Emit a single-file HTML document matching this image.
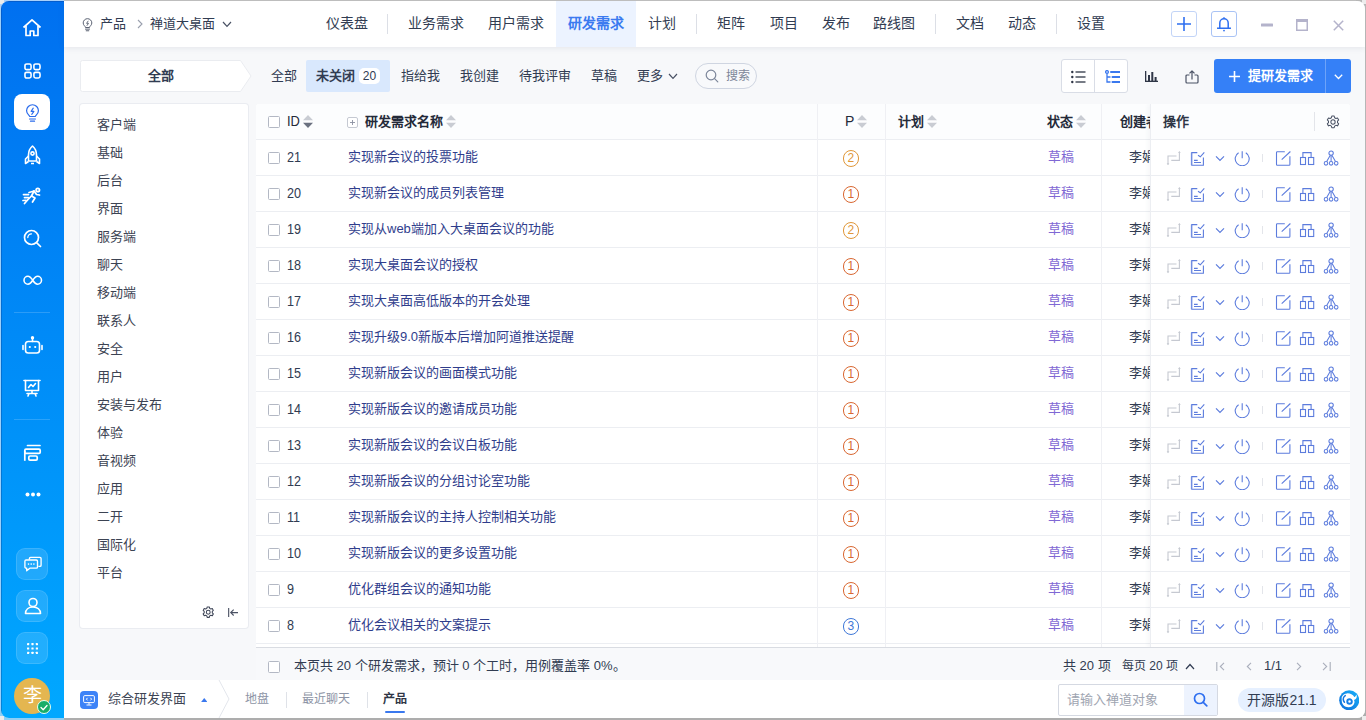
<!DOCTYPE html>
<html lang="zh-CN"><head><meta charset="utf-8"><title>研发需求</title>
<style>
*{box-sizing:border-box;margin:0;padding:0}
html,body{width:1366px;height:720px;overflow:hidden}
body{font-family:"Liberation Sans",sans-serif;font-size:13px;color:#313c52;background:#e4e4e4;position:relative}
i{font-style:normal;display:block}
.edge-l{position:absolute;left:0;top:0;width:12px;height:720px;background:#9ccffa}
.edge-t{position:absolute;left:0;top:0;width:1366px;height:10px;background:linear-gradient(90deg,#a8d0fa 0,#a8d0fa 64px,#bdbdbd 64px)}
.edge-r{position:absolute;right:0;top:0;width:10px;height:720px;background:#b6b6b6}
.edge-b{position:absolute;left:0;bottom:0;width:1366px;height:10px;background:linear-gradient(90deg,#8ecff5 0,#8ecff5 64px,#adadad 64px)}
.cn{position:absolute;width:4px;height:4px;background:#ececec}
#win{position:absolute;left:1px;top:1px;width:1364px;height:717px;border-radius:8px;overflow:hidden;background:#f7f8fa}
/* sidebar */
#side{position:absolute;left:0;top:0;width:63px;height:717px;background:linear-gradient(180deg,#0070f0 0%,#00a8ff 100%);box-shadow:inset 1px 1px 0 rgba(10,50,130,.30)}
#side svg{position:absolute}
.sact{position:absolute;left:13px;top:93px;width:36px;height:36px;border-radius:8px;background:#fff}
.ssep{position:absolute;left:13px;width:36px;height:1px;background:rgba(255,255,255,.17)}
.sbox{position:absolute;left:15px;width:32px;height:32px;border-radius:9px;background:rgba(255,255,255,.13);border:1px solid rgba(255,255,255,.12)}
.avatar{position:absolute;left:13px;top:677px;width:36px;height:36px;border-radius:50%;background:#e4b650;color:#fff;font-size:19px;line-height:35px;text-align:center}
.online{position:absolute;left:36px;top:699px;width:14px;height:14px;border-radius:50%;background:#17ad68;border:1px solid #e6fff2}
/* top nav */
#nav{position:absolute;left:63px;top:0;width:1301px;height:46px;background:#fff;box-shadow:0 1px 6px rgba(60,70,100,.10)}
#nav .t{position:absolute;top:0;height:46px;line-height:45px;font-size:14px;color:#313c52;white-space:nowrap}
#nav .bc{font-size:13px}
#nav .sep{position:absolute;top:13px;width:1px;height:20px;background:#dcdfe6}
#nav .act{position:absolute;left:492px;top:0;width:80px;height:46px;background:#ecf3ff}
#nav .sq{position:absolute;top:10px;width:26px;height:26px;border:1px solid #c2d4f7;border-radius:3px;background:#fff}
#nav svg{position:absolute}
/* toolbar */
.crumb{position:absolute;left:79px;top:59px;width:172px;height:32px}
.crumb b{position:absolute;left:0;top:0;width:161px;line-height:32px;text-align:center;font-size:13px;color:#313c52}
.tab{position:absolute;top:59px;height:32px;line-height:31px;white-space:nowrap;color:#313c52}
.tabact{position:absolute;left:305px;top:59px;width:84px;height:32px;border-radius:2px;background:#d9e8fd}
.badge{position:absolute;left:358px;top:67px;width:21px;height:16px;border-radius:5px;background:#fff;font-size:12px;line-height:16px;text-align:center;color:#313c52}
.search{position:absolute;left:694px;top:62px;width:62px;height:26px;border:1px solid #cfd5e1;border-radius:13px;background:#f8f9fb}
.search span{position:absolute;left:30px;top:0;line-height:24px;font-size:12px;color:#7d8698}
.bgroup{position:absolute;left:1060px;top:58px;width:67px;height:34px;border:1px solid #d9dde6;border-radius:3px;background:#fff}
.bgroup i{position:absolute;left:32px;top:0;width:1px;height:32px;background:#d9dde6}
.pbtn{position:absolute;left:1213px;top:58px;width:137px;height:34px;border-radius:3px;background:#3580f7;color:#fff;font-weight:bold}
.pbtn span{position:absolute;left:34px;top:0;line-height:34px;font-size:13px}
.pbtn i{position:absolute;left:111px;top:0;width:1px;height:34px;background:rgba(255,255,255,.28)}
/* left panel */
#mods{position:absolute;left:79px;top:103px;width:168px;height:524px;background:#fff;border-radius:3px;box-shadow:0 0 0 1px rgba(225,228,235,.6)}
.mod{position:absolute;left:16.500px;height:20px;line-height:20px;font-size:13px;color:#3c4353}
/* table */
#tbl{position:absolute;left:255px;top:103px;width:1094px;height:577px;background:#fff;overflow:hidden;border-radius:3px 3px 0 0}
.th{position:absolute;left:0;top:0;width:1094px;height:36px;background:#fcfdfe;border-bottom:1px solid #eceef2;font-weight:bold;color:#242a39}
.th span{position:absolute;top:0;line-height:35px;white-space:nowrap}
.sort{position:absolute;top:11px}
.vl{position:absolute;top:0;width:1px;height:545px;background:#eff0f4}
.tr{position:absolute;left:0;width:1094px;height:36px;border-bottom:1px solid #eceef2}
.cb{position:absolute;width:12px;height:12px;border:1px solid #b3b8c4;border-radius:1.500px;background:#fff}
.id{position:absolute;left:30.500px;top:0;line-height:35px;color:#313c52;font-size:14px;transform:scaleX(.9);transform-origin:0 50%}
.tt{position:absolute;left:92px;top:0;line-height:34px;color:#2f3d8c;white-space:nowrap}
.pri{position:absolute;left:586.500px;top:10px;width:16.500px;height:16.500px;border:1px solid;border-radius:50%;font-size:12px;line-height:14.500px;text-align:center}
.st{position:absolute;left:792px;top:0;line-height:34px;color:#7f68d4}
.cr{position:absolute;left:872.500px;top:0;line-height:34px;color:#313c52}
.acts{position:absolute;left:894px;top:0;width:200px;height:35px;background:#fff}
.ai{position:absolute;top:10px}
.adiv{position:absolute;left:112px;top:14px;width:1px;height:8px;background:#e3e5ea}
.fix{position:absolute;left:894px;top:0;width:200px;height:545px;border-left:1px solid #eceef2;box-shadow:-2px 0 4px rgba(80,90,120,.05);pointer-events:none}
.tf{position:absolute;left:0;top:543px;width:1094px;height:34px;background:#f8f9fb;border-top:1px solid #d9dce2;color:#313c52}
.tf span{position:absolute;top:1px;line-height:34px;white-space:nowrap}
.tf svg{position:absolute}
/* bottom bar */
#bot{position:absolute;left:63px;top:679px;width:1301px;height:38px;background:#fff}
#bot .t{position:absolute;top:0;line-height:38px;white-space:nowrap;font-size:13px}
#bot .sep{position:absolute;top:12px;width:1px;height:16px;background:#dfe2e8}
#bot svg{position:absolute}
.appi{position:absolute;left:16px;top:11px;width:18px;height:18px;border-radius:4px;background:#3d83f7}
.gsearch{position:absolute;left:994px;top:4px;width:160px;height:32px;border:1px solid #d5d9e2;border-radius:2px;background:#fff}
.gsearch span{position:absolute;left:8px;top:0;line-height:30px;color:#a0a5b1;font-size:13px}
.gsearch i{position:absolute;right:0;top:0;width:33px;height:30px;background:#edf3fe}
.ver{position:absolute;left:1174px;top:8px;width:88px;height:24px;border-radius:12px;background:#e6f0ff;font-size:14px;line-height:24px;text-align:center;color:#313c52}
</style></head><body>
<div class="edge-l"></div><div class="edge-t"></div><div class="edge-r"></div><div class="edge-b"></div><i class="cn" style="left:0;top:0"></i><i class="cn" style="right:0;top:0"></i><i class="cn" style="left:0;bottom:0"></i><i class="cn" style="right:0;bottom:0"></i>
<div id="win">

<!-- ============ SIDEBAR ============ -->
<div id="side">
 <!-- home -->
 <svg style="left:21px;top:17px" width="20" height="20" viewBox="0 0 20 20" fill="none" stroke="#fff" stroke-width="1.700" stroke-linejoin="round"><path d="M1.500 9.500L10 1.800l8.500 7.700"/><path d="M4 8v9.500h4.200v-4.500h3.600v4.500H16V8"/></svg>
 <!-- grid -->
 <svg style="left:22.500px;top:61.500px" width="17" height="16" viewBox="0 0 18 17" fill="none" stroke="#fff" stroke-width="1.700"><rect x="1" y="1" width="6.500" height="6" rx="1.800"/><rect x="10.500" y="1" width="6.500" height="6" rx="1.800"/><rect x="1" y="10" width="6.500" height="6" rx="1.800"/><rect x="10.500" y="10" width="6.500" height="6" rx="1.800"/></svg>
 <div class="sact"></div>
 <!-- bulb -->
 <svg style="left:23.500px;top:102.500px" width="15" height="18.500" viewBox="0 0 16 20" fill="none" stroke="#2b6cec" stroke-width="1.300" stroke-linecap="round" stroke-linejoin="round"><path d="M5 13.500c0-1.300-3.400-2.500-3.400-6.300a6.400 6.400 0 0 1 12.800 0c0 3.800-3.400 5-3.400 6.300z"/><path d="M4.800 16.200h6.400M5.800 18.600h4.400"/><path d="M8.800 4.500L6.500 8h3L7.200 11.200" stroke-width="1.200"/></svg>
 <!-- rocket -->
 <svg style="left:23px;top:144px" width="17" height="20" viewBox="0 0 17 20" fill="none" stroke="#fff" stroke-width="1.600" stroke-linejoin="round"><path d="M8.500 1C5.500 3.500 4.500 7 4.500 10v6h8v-6c0-3-1-6.500-4-9z"/><circle cx="8.500" cy="8.500" r="1.600"/><path d="M4.500 11L1.500 14v4.500l3-2M12.500 11l3 3v4.500l-3-2"/><path d="M7 18.500h3"/></svg>
 <!-- runner -->
 <svg style="left:21px;top:186px" width="20" height="18" viewBox="0 0 20 18" fill="none" stroke="#fff" stroke-width="1.750" stroke-linecap="round" stroke-linejoin="round"><circle cx="15.800" cy="3" r="1.700"/><path d="M7 5.500l5-1.500 2.500 3.500 3 .5"/><path d="M12 4l-2.500 5 3.500 2-2.500 4"/><path d="M9.500 9L6 12.500 2.500 16.500"/><path d="M1.500 7.500h5M2.500 10.500h4M1 13.500l3-.2"/></svg>
 <!-- search -->
 <svg style="left:22px;top:228px" width="19" height="19" viewBox="0 0 19 19" fill="none" stroke="#fff" stroke-width="1.700" stroke-linecap="round"><circle cx="8.500" cy="8.500" r="7"/><path d="M13.800 13.800l3.700 3.700"/><path d="M4.800 8.500a3.700 3.700 0 0 1 3.700-3.700" stroke-width="1.300"/></svg>
 <!-- infinity -->
 <svg style="left:22px;top:274px" width="19.500" height="10.500" viewBox="0 0 21 12" fill="none" stroke="#fff" stroke-width="1.800"><path d="M10.500 6C8.500 3 7 1.500 5 1.500a4.500 4.500 0 0 0 0 9c2 0 3.500-1.500 5.500-4.500s3.500-4.500 5.500-4.500a4.500 4.500 0 0 1 0 9c-2 0-3.500-1.500-5.500-4.500z"/></svg>
 <div class="ssep" style="top:311px"></div>
 <!-- robot -->
 <svg style="left:21px;top:335px" width="21" height="19" viewBox="0 0 21 19" fill="none" stroke="#fff" stroke-width="1.600" stroke-linecap="round"><rect x="3.500" y="5.500" width="14" height="11.500" rx="2.800"/><path d="M10.500 5.500V2.500"/><circle cx="10.500" cy="1.800" r=".9" fill="#fff"/><path d="M1 9.500v4M20 9.500v4"/><circle cx="7.800" cy="11" r="1.100" fill="#fff" stroke="none"/><circle cx="13.200" cy="11" r="1.100" fill="#fff" stroke="none"/></svg>
 <!-- presentation -->
 <svg style="left:22px;top:378px" width="18" height="18" viewBox="0 0 18 18" fill="none" stroke="#fff" stroke-width="1.600" stroke-linecap="round" stroke-linejoin="round"><path d="M1 1.500h16"/><path d="M2.500 1.500v10h13v-10"/><path d="M5.500 8.500l2.500-3 2 2 2.500-3"/><path d="M4 14.500h10M6 14.500l-1 2.500M12 14.500l1 2.500M9 11.500v3"/></svg>
 <div class="ssep" style="top:418px"></div>
 <!-- kanban -->
 <svg style="left:22px;top:443px" width="19" height="18" viewBox="0 0 19 18" fill="none" stroke="#fff" stroke-width="1.700"><path d="M4.500 1.500h12.500" stroke-linecap="round"/><rect x="1.800" y="5.200" width="15.400" height="4.200" rx="1.200"/><rect x="5.800" y="12" width="8.400" height="4.200" rx="1.200"/><path d="M1.800 7v9.800"/></svg>
 <!-- dots -->
 <svg style="left:24px;top:491px" width="16" height="5" viewBox="0 0 16 5" fill="#fff"><circle cx="2.500" cy="2.500" r="2"/><circle cx="8" cy="2.500" r="2"/><circle cx="13.500" cy="2.500" r="2"/></svg>
 <div class="sbox" style="top:547px"></div>
 <div class="sbox" style="top:589px"></div>
 <div class="sbox" style="top:631px"></div>
 <!-- chat -->
 <svg style="left:23px;top:555px" width="18" height="16.200" viewBox="0 0 20 18" fill="none" stroke="#fff" stroke-width="1.500" stroke-linejoin="round"><path d="M6 4V2.800A1.300 1.300 0 0 1 7.300 1.500h10.400A1.300 1.300 0 0 1 19 2.800v7.400a1.300 1.300 0 0 1-1.300 1.300H16"/><path d="M2.300 4.500h11.400A1.300 1.300 0 0 1 15 5.800v6.400a1.300 1.300 0 0 1-1.300 1.300H6.500L3 16.500v-3h-.7A1.300 1.300 0 0 1 1 12.200V5.800a1.300 1.300 0 0 1 1.300-1.300z"/><circle cx="5" cy="9" r=".9" fill="#fff" stroke="none"/><circle cx="8" cy="9" r=".9" fill="#fff" stroke="none"/><circle cx="11" cy="9" r=".9" fill="#fff" stroke="none"/></svg>
 <!-- user -->
 <svg style="left:23px;top:596px" width="18" height="18" viewBox="0 0 18 18" fill="none" stroke="#fff" stroke-width="1.600"><circle cx="9" cy="5.500" r="4"/><path d="M1.500 16.500c0-4 3-6.500 7.500-6.500s7.500 2.500 7.500 6.500z" stroke-linejoin="round"/></svg>
 <!-- 9 dots -->
 <svg style="left:26px;top:642px" width="11" height="11" viewBox="0 0 12 12" fill="#fff"><rect x="0" y="0" width="2.400" height="2.400" rx=".5"/><rect x="4.800" y="0" width="2.400" height="2.400" rx=".5"/><rect x="9.600" y="0" width="2.400" height="2.400" rx=".5"/><rect x="0" y="4.800" width="2.400" height="2.400" rx=".5"/><rect x="4.800" y="4.800" width="2.400" height="2.400" rx=".5"/><rect x="9.600" y="4.800" width="2.400" height="2.400" rx=".5"/><rect x="0" y="9.600" width="2.400" height="2.400" rx=".5"/><rect x="4.800" y="9.600" width="2.400" height="2.400" rx=".5"/><rect x="9.600" y="9.600" width="2.400" height="2.400" rx=".5"/></svg>
 <div class="avatar">李</div>
 <div class="online"></div>
 <svg style="left:39px;top:703px" width="8" height="7" viewBox="0 0 8 7" fill="none" stroke="#fff" stroke-width="1.300" stroke-linecap="round" stroke-linejoin="round"><path d="M1 3.500l2.200 2.200L7 1.500"/></svg>
</div>

<!-- ============ NAV ============ -->
<div id="nav">
 <svg style="left:17.500px;top:16.500px" width="11" height="14" viewBox="0 0 12 15" fill="none" stroke="#4a5265" stroke-width="1" stroke-linecap="round" stroke-linejoin="round"><path d="M3.800 9.800C3.800 8.800 1.300 7.900 1.300 5.300a4.700 4.700 0 0 1 9.400 0c0 2.600-2.500 3.500-2.500 4.500z"/><path d="M3.800 12h4.400M4.600 13.800h2.800"/><path d="M6.600 3.300L5 5.700h2.100L5.500 8" stroke-width=".9"/></svg>
 <span class="t bc" style="left:36px">产品</span>
 <svg style="left:73px;top:18px" width="6" height="10" viewBox="0 0 6 10" fill="none" stroke="#9aa0ae" stroke-width="1.100"><path d="M1 1l4 4-4 4"/></svg>
 <span class="t bc" style="left:86px">禅道大桌面</span>
 <svg style="left:158px;top:20px" width="10" height="7" viewBox="0 0 10 7" fill="none" stroke="#4a5265" stroke-width="1.200"><path d="M1 1l4 4.300L9 1"/></svg>

 <div class="act"></div>
 <span class="t" style="left:262px">仪表盘</span>
 <i class="sep" style="left:323px"></i>
 <span class="t" style="left:344px">业务需求</span>
 <span class="t" style="left:424px">用户需求</span>
 <span class="t" style="left:504px;color:#3b7af0;font-weight:bold">研发需求</span>
 <span class="t" style="left:584px">计划</span>
 <i class="sep" style="left:632px"></i>
 <span class="t" style="left:653px">矩阵</span>
 <span class="t" style="left:706px">项目</span>
 <span class="t" style="left:758px">发布</span>
 <span class="t" style="left:809px">路线图</span>
 <i class="sep" style="left:871px"></i>
 <span class="t" style="left:892px">文档</span>
 <span class="t" style="left:944px">动态</span>
 <i class="sep" style="left:992px"></i>
 <span class="t" style="left:1013px">设置</span>

 <div class="sq" style="left:1107px"></div>
 <svg style="left:1113px;top:16px" width="14" height="14" viewBox="0 0 14 14" stroke="#2e6ff0" stroke-width="1.600"><path d="M7 0v14M0 7h14"/></svg>
 <div class="sq" style="left:1147px;border-color:#a9c3f5"></div>
 <svg style="left:1153px;top:14px" width="14" height="18" viewBox="0 0 14 18" fill="none" stroke="#2e6ff0" stroke-width="1.500" stroke-linejoin="round"><path d="M2.800 13V8a4.200 4.200 0 0 1 8.400 0v5"/><path d="M.5 13.200h13" stroke-linecap="round"/><path d="M7 2.200V3.500"/><circle cx="7" cy="15.600" r=".9" fill="#2e6ff0" stroke="none"/></svg>
 <svg style="left:1197px;top:22px" width="12" height="4" viewBox="0 0 12 4"><rect x="0" y=".5" width="12" height="3" rx=".5" fill="#b4b3cb"/></svg>
 <svg style="left:1232px;top:18px" width="12" height="12" viewBox="0 0 12 12" fill="none" stroke="#b4b3cb"><rect x=".75" y=".75" width="10.500" height="10.500" stroke-width="1.500"/><path d="M.5 1.800h11" stroke-width="2.600"/></svg>
 <svg style="left:1269px;top:19px" width="11" height="11" viewBox="0 0 11 11" fill="none" stroke="#b4b3cb" stroke-width="1.500"><path d="M.8.800l9.400 9.400M10.200.8L.8 10.200"/></svg>
</div>

<!-- ============ TOOLBAR ============ -->
<svg class="crumb" viewBox="0 0 172 32" fill="#fff" stroke="#eaecf0" stroke-width="1"><path d="M2.500.5H160.500L171 16 160.500 31.500H2.500a2 2 0 0 1-2-2V2.500a2 2 0 0 1 2-2z"/></svg>
<div class="crumb"><b>全部</b></div>
<div class="tabact"></div>
<span class="tab" style="left:270px">全部</span>
<span class="tab" style="left:315px;font-weight:bold">未关闭</span>
<span class="badge">20</span>
<span class="tab" style="left:400px">指给我</span>
<span class="tab" style="left:459px">我创建</span>
<span class="tab" style="left:518px">待我评审</span>
<span class="tab" style="left:590px">草稿</span>
<span class="tab" style="left:636px">更多</span>
<svg style="position:absolute;left:667px;top:72px" width="10" height="7" viewBox="0 0 10 7" fill="none" stroke="#4a5265" stroke-width="1.200"><path d="M1 1l4 4.300L9 1"/></svg>
<div class="search"><svg style="position:absolute;left:9px;top:5px" width="14" height="14" viewBox="0 0 14 14" fill="none" stroke="#7c869a" stroke-width="1.200" stroke-linecap="round"><circle cx="6" cy="6" r="4.800"/><path d="M9.600 9.600l3.200 3.200"/></svg><span>搜索</span></div>

<div class="bgroup"><i></i>
 <svg style="position:absolute;left:9px;top:10px" width="15" height="14" viewBox="0 0 15 14" fill="#2f3646"><circle cx="1.300" cy="2" r="1.200"/><circle cx="1.300" cy="7" r="1.200"/><circle cx="1.300" cy="12" r="1.200"/><rect x="4.500" y="1.350" width="10" height="1.300"/><rect x="4.500" y="6.350" width="10" height="1.300"/><rect x="4.500" y="11.350" width="10" height="1.300"/></svg>
 <svg style="position:absolute;left:43px;top:10px" width="15" height="14" viewBox="0 0 15 14" fill="none" stroke="#3a78ee" stroke-width="1.300"><circle cx="2" cy="2" r="1.400"/><path d="M2 3.500v8.500h3.500M2 7h3.500"/><path d="M6 2h8.500M7.500 7h7M7.500 12h7" stroke-width="2" stroke-linecap="round"/></svg>
</div>
<svg style="position:absolute;left:1144px;top:70px" width="13" height="11" viewBox="0 0 13 11" fill="#2f3646"><rect x="0" y="0" width="1.300" height="11"/><rect x="0" y="9.700" width="13" height="1.300"/><rect x="3" y="4" width="2" height="6"/><rect x="6.300" y="1" width="2" height="9"/><rect x="9.600" y="6" width="2" height="4"/></svg>
<svg style="position:absolute;left:1184px;top:69px" width="14" height="14" viewBox="0 0 14 14" fill="none" stroke="#4a5265" stroke-width="1.200" stroke-linejoin="round"><path d="M4.500 5H2a1 1 0 0 0-1 1v6a1 1 0 0 0 1 1h10a1 1 0 0 0 1-1V6a1 1 0 0 0-1-1H9.500"/><path d="M7 9.500V1M4.500 3.300L7 .8l2.500 2.500"/></svg>
<div class="pbtn"><svg style="position:absolute;left:15px;top:12px" width="11" height="11" viewBox="0 0 11 11" stroke="#fff" stroke-width="1.600"><path d="M5.500 0v11M0 5.500h11"/></svg><span>提研发需求</span><i></i><svg style="position:absolute;left:120px;top:15px" width="9" height="6" viewBox="0 0 9 6" fill="none" stroke="#fff" stroke-width="1.300"><path d="M.8.800l3.700 3.700L8.200.8"/></svg></div>

<!-- ============ MODULE PANEL ============ -->
<div id="mods">
<div class="mod" style="top:11px">客户端</div>
<div class="mod" style="top:39px">基础</div>
<div class="mod" style="top:67px">后台</div>
<div class="mod" style="top:95px">界面</div>
<div class="mod" style="top:123px">服务端</div>
<div class="mod" style="top:151px">聊天</div>
<div class="mod" style="top:179px">移动端</div>
<div class="mod" style="top:207px">联系人</div>
<div class="mod" style="top:235px">安全</div>
<div class="mod" style="top:263px">用户</div>
<div class="mod" style="top:291px">安装与发布</div>
<div class="mod" style="top:319px">体验</div>
<div class="mod" style="top:347px">音视频</div>
<div class="mod" style="top:375px">应用</div>
<div class="mod" style="top:403px">二开</div>
<div class="mod" style="top:431px">国际化</div>
<div class="mod" style="top:459px">平台</div>
 <svg style="position:absolute;left:122px;top:502px" width="12.500" height="12.500" viewBox="0 0 13 13" fill="none" stroke="#3f4658" stroke-width="1.100"><circle cx="6.500" cy="6.500" r="2"/><path d="M5.400 1h2.200l.4 1.500 1.200.7 1.500-.5 1.100 1.900-1.100 1.100v1.400l1.100 1.100-1.100 1.900-1.500-.5-1.200.7-.4 1.500H5.400L5 10.300l-1.200-.7-1.500.5-1.100-1.900 1.100-1.100V5.700L1.200 4.600l1.100-1.900 1.500.5L5 2.500z" stroke-linejoin="round"/></svg>
 <svg style="position:absolute;left:147.500px;top:504px" width="10" height="9.200" viewBox="0 0 12 11" fill="none" stroke="#4a5163" stroke-width="1.350"><path d="M.8 0v11M3.500 5.500H12M6.800 2L3.300 5.500 6.800 9"/></svg>
</div>

<!-- ============ TABLE ============ -->
<div id="tbl">
 <div class="th">
  <i class="cb" style="left:12px;top:12px"></i>
  <span style="left:30.500px;font-weight:normal;font-size:14px;transform:scaleX(.92);transform-origin:0 50%">ID</span><svg class="sort" style="left:47px" width="10" height="13" viewBox="0 0 10 13"><path d="M5 0L10 5.200H0z" fill="#c9ccd3"/><path d="M5 13L10 7.800H0z" fill="#6b7180"/></svg>
  <svg style="position:absolute;left:91px;top:13px" width="11" height="11" viewBox="0 0 11 11" fill="#fff" stroke="#c5c9d2"><rect x=".5" y=".5" width="10" height="10" rx="1.500"/><path d="M3 5.500h5M5.500 3v5" stroke="#8a90a0" stroke-width=".9"/></svg>
  <span style="left:109px">研发需求名称</span><svg class="sort" style="left:190px" width="10" height="13" viewBox="0 0 10 13"><path d="M5 0L10 5.200H0z" fill="#c9ccd3"/><path d="M5 13L10 7.800H0z" fill="#c9ccd3"/></svg>
  <span style="left:589px;font-weight:normal;font-size:14px">P</span><svg class="sort" style="left:601px" width="10" height="13" viewBox="0 0 10 13"><path d="M5 0L10 5.200H0z" fill="#c9ccd3"/><path d="M5 13L10 7.800H0z" fill="#c9ccd3"/></svg>
  <span style="left:641.500px">计划</span><svg class="sort" style="left:671px" width="10" height="13" viewBox="0 0 10 13"><path d="M5 0L10 5.200H0z" fill="#c9ccd3"/><path d="M5 13L10 7.800H0z" fill="#c9ccd3"/></svg>
  <span style="left:791px">状态</span><svg class="sort" style="left:820px" width="10" height="13" viewBox="0 0 10 13"><path d="M5 0L10 5.200H0z" fill="#c9ccd3"/><path d="M5 13L10 7.800H0z" fill="#c9ccd3"/></svg>
  <span style="left:864px">创建者</span>
 </div>
 <div style="position:absolute;left:0;top:36px;width:1094px;height:507px;overflow:hidden">
  <div style="position:absolute;left:0;top:-36px;width:1094px;height:600px">
<div class="tr" style="top:36px"><i class="cb" style="left:12px;top:12px"></i><span class="id">21</span><a class="tt">实现新会议的投票功能</a><span class="pri" style="color:#e0973a;border-color:#e0973a">2</span><span class="st">草稿</span><span class="cr">李娟</span><div class="acts"><svg class="ai" style="left:16px" width="16" height="16" viewBox="0 0 16 16" fill="none" stroke="#c6c9d1" stroke-width="1.100"><path d="M10.500 6H2v8.500"/><path d="M5.300 10.400h8.100V1.800"/><path d="M.7 13.200L2 15.300l1.300-2.100z" fill="#c6c9d1" stroke="none"/><path d="M12.100 3l1.300-2.100L14.700 3z" fill="#c6c9d1" stroke="none"/></svg><svg class="ai" style="left:40px" width="16" height="16" viewBox="0 0 16 16" fill="none" stroke="#5c7cdd" stroke-width="1.100"><path d="M7.300 2.600H1.800v12.600h11.600V7.400"/><path d="M1.300 2.600v12.600" stroke-width=".6"/><path d="M4 10.400h3.700M4 12.500h7"/><path d="M8 5.200l2.300 1.600 4-4.500"/></svg><svg class="ai" style="left:65px" width="10" height="16" viewBox="0 0 10 16" fill="none" stroke="#5c7cdd" stroke-width="1.150"><path d="M1 6.300L5 10.500l4-4.200"/></svg><svg class="ai" style="left:84px" width="17" height="16" viewBox="0 0 17 16" fill="none" stroke="#5c7cdd" stroke-width="1.100"><path d="M8.200 1.200V8.200"/><path d="M4.600 2.700A7 7 0 1 0 11.800 2.700"/></svg><i class="adiv"></i><svg class="ai" style="left:125px" width="17" height="16" viewBox="0 0 17 16" fill="none" stroke="#5c7cdd" stroke-width="1.100" stroke-linejoin="round"><path d="M9.800 1.800H2.300a.8.800 0 0 0-.8.800v11.800a.8.800 0 0 0 .8.800h11.800a.8.800 0 0 0 .8-.8V6.300"/><path d="M6.700 9.700L15.400 1.500"/></svg><svg class="ai" style="left:149px" width="17" height="16" viewBox="0 0 17 16" fill="none" stroke="#5c7cdd" stroke-width="1.100"><path d="M3.900 7.400V2.600h8.200v4.800"/><rect x="1.500" y="7.500" width="5" height="7"/><rect x="9.500" y="7.500" width="5.200" height="7"/></svg><svg class="ai" style="left:173px" width="17" height="16" viewBox="0 0 17 16" fill="none" stroke="#5c7cdd" stroke-width="1.050"><circle cx="8.100" cy="3.100" r="2.200"/><circle cx="3" cy="13.300" r="1.800"/><circle cx="8.100" cy="13.300" r="1.800"/><circle cx="13.200" cy="13.300" r="1.800"/><path d="M8.100 5.300v6.200M7.300 5.200L3.700 11.600M8.900 5.200l3.600 6.400"/></svg></div></div>
<div class="tr" style="top:72px"><i class="cb" style="left:12px;top:12px"></i><span class="id">20</span><a class="tt">实现新会议的成员列表管理</a><span class="pri" style="color:#d96731;border-color:#d96731">1</span><span class="st">草稿</span><span class="cr">李娟</span><div class="acts"><svg class="ai" style="left:16px" width="16" height="16" viewBox="0 0 16 16" fill="none" stroke="#c6c9d1" stroke-width="1.100"><path d="M10.500 6H2v8.500"/><path d="M5.300 10.400h8.100V1.800"/><path d="M.7 13.200L2 15.300l1.300-2.100z" fill="#c6c9d1" stroke="none"/><path d="M12.100 3l1.300-2.100L14.700 3z" fill="#c6c9d1" stroke="none"/></svg><svg class="ai" style="left:40px" width="16" height="16" viewBox="0 0 16 16" fill="none" stroke="#5c7cdd" stroke-width="1.100"><path d="M7.300 2.600H1.800v12.600h11.600V7.400"/><path d="M1.300 2.600v12.600" stroke-width=".6"/><path d="M4 10.400h3.700M4 12.500h7"/><path d="M8 5.200l2.300 1.600 4-4.500"/></svg><svg class="ai" style="left:65px" width="10" height="16" viewBox="0 0 10 16" fill="none" stroke="#5c7cdd" stroke-width="1.150"><path d="M1 6.300L5 10.500l4-4.200"/></svg><svg class="ai" style="left:84px" width="17" height="16" viewBox="0 0 17 16" fill="none" stroke="#5c7cdd" stroke-width="1.100"><path d="M8.200 1.200V8.200"/><path d="M4.600 2.700A7 7 0 1 0 11.800 2.700"/></svg><i class="adiv"></i><svg class="ai" style="left:125px" width="17" height="16" viewBox="0 0 17 16" fill="none" stroke="#5c7cdd" stroke-width="1.100" stroke-linejoin="round"><path d="M9.800 1.800H2.300a.8.800 0 0 0-.8.800v11.800a.8.800 0 0 0 .8.800h11.800a.8.800 0 0 0 .8-.8V6.300"/><path d="M6.700 9.700L15.400 1.500"/></svg><svg class="ai" style="left:149px" width="17" height="16" viewBox="0 0 17 16" fill="none" stroke="#5c7cdd" stroke-width="1.100"><path d="M3.900 7.400V2.600h8.200v4.800"/><rect x="1.500" y="7.500" width="5" height="7"/><rect x="9.500" y="7.500" width="5.200" height="7"/></svg><svg class="ai" style="left:173px" width="17" height="16" viewBox="0 0 17 16" fill="none" stroke="#5c7cdd" stroke-width="1.050"><circle cx="8.100" cy="3.100" r="2.200"/><circle cx="3" cy="13.300" r="1.800"/><circle cx="8.100" cy="13.300" r="1.800"/><circle cx="13.200" cy="13.300" r="1.800"/><path d="M8.100 5.300v6.200M7.300 5.200L3.700 11.600M8.900 5.200l3.600 6.400"/></svg></div></div>
<div class="tr" style="top:108px"><i class="cb" style="left:12px;top:12px"></i><span class="id">19</span><a class="tt">实现从web端加入大桌面会议的功能</a><span class="pri" style="color:#e0973a;border-color:#e0973a">2</span><span class="st">草稿</span><span class="cr">李娟</span><div class="acts"><svg class="ai" style="left:16px" width="16" height="16" viewBox="0 0 16 16" fill="none" stroke="#c6c9d1" stroke-width="1.100"><path d="M10.500 6H2v8.500"/><path d="M5.300 10.400h8.100V1.800"/><path d="M.7 13.200L2 15.300l1.300-2.100z" fill="#c6c9d1" stroke="none"/><path d="M12.100 3l1.300-2.100L14.700 3z" fill="#c6c9d1" stroke="none"/></svg><svg class="ai" style="left:40px" width="16" height="16" viewBox="0 0 16 16" fill="none" stroke="#5c7cdd" stroke-width="1.100"><path d="M7.300 2.600H1.800v12.600h11.600V7.400"/><path d="M1.300 2.600v12.600" stroke-width=".6"/><path d="M4 10.400h3.700M4 12.500h7"/><path d="M8 5.200l2.300 1.600 4-4.500"/></svg><svg class="ai" style="left:65px" width="10" height="16" viewBox="0 0 10 16" fill="none" stroke="#5c7cdd" stroke-width="1.150"><path d="M1 6.300L5 10.500l4-4.200"/></svg><svg class="ai" style="left:84px" width="17" height="16" viewBox="0 0 17 16" fill="none" stroke="#5c7cdd" stroke-width="1.100"><path d="M8.200 1.200V8.200"/><path d="M4.600 2.700A7 7 0 1 0 11.800 2.700"/></svg><i class="adiv"></i><svg class="ai" style="left:125px" width="17" height="16" viewBox="0 0 17 16" fill="none" stroke="#5c7cdd" stroke-width="1.100" stroke-linejoin="round"><path d="M9.800 1.800H2.300a.8.800 0 0 0-.8.800v11.800a.8.800 0 0 0 .8.800h11.800a.8.800 0 0 0 .8-.8V6.300"/><path d="M6.700 9.700L15.400 1.500"/></svg><svg class="ai" style="left:149px" width="17" height="16" viewBox="0 0 17 16" fill="none" stroke="#5c7cdd" stroke-width="1.100"><path d="M3.900 7.400V2.600h8.200v4.800"/><rect x="1.500" y="7.500" width="5" height="7"/><rect x="9.500" y="7.500" width="5.200" height="7"/></svg><svg class="ai" style="left:173px" width="17" height="16" viewBox="0 0 17 16" fill="none" stroke="#5c7cdd" stroke-width="1.050"><circle cx="8.100" cy="3.100" r="2.200"/><circle cx="3" cy="13.300" r="1.800"/><circle cx="8.100" cy="13.300" r="1.800"/><circle cx="13.200" cy="13.300" r="1.800"/><path d="M8.100 5.300v6.200M7.300 5.200L3.700 11.600M8.900 5.200l3.600 6.400"/></svg></div></div>
<div class="tr" style="top:144px"><i class="cb" style="left:12px;top:12px"></i><span class="id">18</span><a class="tt">实现大桌面会议的授权</a><span class="pri" style="color:#d96731;border-color:#d96731">1</span><span class="st">草稿</span><span class="cr">李娟</span><div class="acts"><svg class="ai" style="left:16px" width="16" height="16" viewBox="0 0 16 16" fill="none" stroke="#c6c9d1" stroke-width="1.100"><path d="M10.500 6H2v8.500"/><path d="M5.300 10.400h8.100V1.800"/><path d="M.7 13.200L2 15.300l1.300-2.100z" fill="#c6c9d1" stroke="none"/><path d="M12.100 3l1.300-2.100L14.700 3z" fill="#c6c9d1" stroke="none"/></svg><svg class="ai" style="left:40px" width="16" height="16" viewBox="0 0 16 16" fill="none" stroke="#5c7cdd" stroke-width="1.100"><path d="M7.300 2.600H1.800v12.600h11.600V7.400"/><path d="M1.300 2.600v12.600" stroke-width=".6"/><path d="M4 10.400h3.700M4 12.500h7"/><path d="M8 5.200l2.300 1.600 4-4.500"/></svg><svg class="ai" style="left:65px" width="10" height="16" viewBox="0 0 10 16" fill="none" stroke="#5c7cdd" stroke-width="1.150"><path d="M1 6.300L5 10.500l4-4.200"/></svg><svg class="ai" style="left:84px" width="17" height="16" viewBox="0 0 17 16" fill="none" stroke="#5c7cdd" stroke-width="1.100"><path d="M8.200 1.200V8.200"/><path d="M4.600 2.700A7 7 0 1 0 11.800 2.700"/></svg><i class="adiv"></i><svg class="ai" style="left:125px" width="17" height="16" viewBox="0 0 17 16" fill="none" stroke="#5c7cdd" stroke-width="1.100" stroke-linejoin="round"><path d="M9.800 1.800H2.300a.8.800 0 0 0-.8.800v11.800a.8.800 0 0 0 .8.800h11.800a.8.800 0 0 0 .8-.8V6.300"/><path d="M6.700 9.700L15.400 1.500"/></svg><svg class="ai" style="left:149px" width="17" height="16" viewBox="0 0 17 16" fill="none" stroke="#5c7cdd" stroke-width="1.100"><path d="M3.900 7.400V2.600h8.200v4.800"/><rect x="1.500" y="7.500" width="5" height="7"/><rect x="9.500" y="7.500" width="5.200" height="7"/></svg><svg class="ai" style="left:173px" width="17" height="16" viewBox="0 0 17 16" fill="none" stroke="#5c7cdd" stroke-width="1.050"><circle cx="8.100" cy="3.100" r="2.200"/><circle cx="3" cy="13.300" r="1.800"/><circle cx="8.100" cy="13.300" r="1.800"/><circle cx="13.200" cy="13.300" r="1.800"/><path d="M8.100 5.300v6.200M7.300 5.200L3.700 11.600M8.900 5.200l3.600 6.400"/></svg></div></div>
<div class="tr" style="top:180px"><i class="cb" style="left:12px;top:12px"></i><span class="id">17</span><a class="tt">实现大桌面高低版本的开会处理</a><span class="pri" style="color:#d96731;border-color:#d96731">1</span><span class="st">草稿</span><span class="cr">李娟</span><div class="acts"><svg class="ai" style="left:16px" width="16" height="16" viewBox="0 0 16 16" fill="none" stroke="#c6c9d1" stroke-width="1.100"><path d="M10.500 6H2v8.500"/><path d="M5.300 10.400h8.100V1.800"/><path d="M.7 13.200L2 15.300l1.300-2.100z" fill="#c6c9d1" stroke="none"/><path d="M12.100 3l1.300-2.100L14.700 3z" fill="#c6c9d1" stroke="none"/></svg><svg class="ai" style="left:40px" width="16" height="16" viewBox="0 0 16 16" fill="none" stroke="#5c7cdd" stroke-width="1.100"><path d="M7.300 2.600H1.800v12.600h11.600V7.400"/><path d="M1.300 2.600v12.600" stroke-width=".6"/><path d="M4 10.400h3.700M4 12.500h7"/><path d="M8 5.200l2.300 1.600 4-4.500"/></svg><svg class="ai" style="left:65px" width="10" height="16" viewBox="0 0 10 16" fill="none" stroke="#5c7cdd" stroke-width="1.150"><path d="M1 6.300L5 10.500l4-4.200"/></svg><svg class="ai" style="left:84px" width="17" height="16" viewBox="0 0 17 16" fill="none" stroke="#5c7cdd" stroke-width="1.100"><path d="M8.200 1.200V8.200"/><path d="M4.600 2.700A7 7 0 1 0 11.800 2.700"/></svg><i class="adiv"></i><svg class="ai" style="left:125px" width="17" height="16" viewBox="0 0 17 16" fill="none" stroke="#5c7cdd" stroke-width="1.100" stroke-linejoin="round"><path d="M9.800 1.800H2.300a.8.800 0 0 0-.8.800v11.800a.8.800 0 0 0 .8.800h11.800a.8.800 0 0 0 .8-.8V6.300"/><path d="M6.700 9.700L15.400 1.500"/></svg><svg class="ai" style="left:149px" width="17" height="16" viewBox="0 0 17 16" fill="none" stroke="#5c7cdd" stroke-width="1.100"><path d="M3.900 7.400V2.600h8.200v4.800"/><rect x="1.500" y="7.500" width="5" height="7"/><rect x="9.500" y="7.500" width="5.200" height="7"/></svg><svg class="ai" style="left:173px" width="17" height="16" viewBox="0 0 17 16" fill="none" stroke="#5c7cdd" stroke-width="1.050"><circle cx="8.100" cy="3.100" r="2.200"/><circle cx="3" cy="13.300" r="1.800"/><circle cx="8.100" cy="13.300" r="1.800"/><circle cx="13.200" cy="13.300" r="1.800"/><path d="M8.100 5.300v6.200M7.300 5.200L3.700 11.600M8.900 5.200l3.600 6.400"/></svg></div></div>
<div class="tr" style="top:216px"><i class="cb" style="left:12px;top:12px"></i><span class="id">16</span><a class="tt">实现升级9.0新版本后增加阿道推送提醒</a><span class="pri" style="color:#d96731;border-color:#d96731">1</span><span class="st">草稿</span><span class="cr">李娟</span><div class="acts"><svg class="ai" style="left:16px" width="16" height="16" viewBox="0 0 16 16" fill="none" stroke="#c6c9d1" stroke-width="1.100"><path d="M10.500 6H2v8.500"/><path d="M5.300 10.400h8.100V1.800"/><path d="M.7 13.200L2 15.300l1.300-2.100z" fill="#c6c9d1" stroke="none"/><path d="M12.100 3l1.300-2.100L14.700 3z" fill="#c6c9d1" stroke="none"/></svg><svg class="ai" style="left:40px" width="16" height="16" viewBox="0 0 16 16" fill="none" stroke="#5c7cdd" stroke-width="1.100"><path d="M7.300 2.600H1.800v12.600h11.600V7.400"/><path d="M1.300 2.600v12.600" stroke-width=".6"/><path d="M4 10.400h3.700M4 12.500h7"/><path d="M8 5.200l2.300 1.600 4-4.500"/></svg><svg class="ai" style="left:65px" width="10" height="16" viewBox="0 0 10 16" fill="none" stroke="#5c7cdd" stroke-width="1.150"><path d="M1 6.300L5 10.500l4-4.200"/></svg><svg class="ai" style="left:84px" width="17" height="16" viewBox="0 0 17 16" fill="none" stroke="#5c7cdd" stroke-width="1.100"><path d="M8.200 1.200V8.200"/><path d="M4.600 2.700A7 7 0 1 0 11.800 2.700"/></svg><i class="adiv"></i><svg class="ai" style="left:125px" width="17" height="16" viewBox="0 0 17 16" fill="none" stroke="#5c7cdd" stroke-width="1.100" stroke-linejoin="round"><path d="M9.800 1.800H2.300a.8.800 0 0 0-.8.800v11.800a.8.800 0 0 0 .8.800h11.800a.8.800 0 0 0 .8-.8V6.300"/><path d="M6.700 9.700L15.400 1.500"/></svg><svg class="ai" style="left:149px" width="17" height="16" viewBox="0 0 17 16" fill="none" stroke="#5c7cdd" stroke-width="1.100"><path d="M3.900 7.400V2.600h8.200v4.800"/><rect x="1.500" y="7.500" width="5" height="7"/><rect x="9.500" y="7.500" width="5.200" height="7"/></svg><svg class="ai" style="left:173px" width="17" height="16" viewBox="0 0 17 16" fill="none" stroke="#5c7cdd" stroke-width="1.050"><circle cx="8.100" cy="3.100" r="2.200"/><circle cx="3" cy="13.300" r="1.800"/><circle cx="8.100" cy="13.300" r="1.800"/><circle cx="13.200" cy="13.300" r="1.800"/><path d="M8.100 5.300v6.200M7.300 5.200L3.700 11.600M8.900 5.200l3.600 6.400"/></svg></div></div>
<div class="tr" style="top:252px"><i class="cb" style="left:12px;top:12px"></i><span class="id">15</span><a class="tt">实现新版会议的画面模式功能</a><span class="pri" style="color:#d96731;border-color:#d96731">1</span><span class="st">草稿</span><span class="cr">李娟</span><div class="acts"><svg class="ai" style="left:16px" width="16" height="16" viewBox="0 0 16 16" fill="none" stroke="#c6c9d1" stroke-width="1.100"><path d="M10.500 6H2v8.500"/><path d="M5.300 10.400h8.100V1.800"/><path d="M.7 13.200L2 15.300l1.300-2.100z" fill="#c6c9d1" stroke="none"/><path d="M12.100 3l1.300-2.100L14.700 3z" fill="#c6c9d1" stroke="none"/></svg><svg class="ai" style="left:40px" width="16" height="16" viewBox="0 0 16 16" fill="none" stroke="#5c7cdd" stroke-width="1.100"><path d="M7.300 2.600H1.800v12.600h11.600V7.400"/><path d="M1.300 2.600v12.600" stroke-width=".6"/><path d="M4 10.400h3.700M4 12.500h7"/><path d="M8 5.200l2.300 1.600 4-4.500"/></svg><svg class="ai" style="left:65px" width="10" height="16" viewBox="0 0 10 16" fill="none" stroke="#5c7cdd" stroke-width="1.150"><path d="M1 6.300L5 10.500l4-4.200"/></svg><svg class="ai" style="left:84px" width="17" height="16" viewBox="0 0 17 16" fill="none" stroke="#5c7cdd" stroke-width="1.100"><path d="M8.200 1.200V8.200"/><path d="M4.600 2.700A7 7 0 1 0 11.800 2.700"/></svg><i class="adiv"></i><svg class="ai" style="left:125px" width="17" height="16" viewBox="0 0 17 16" fill="none" stroke="#5c7cdd" stroke-width="1.100" stroke-linejoin="round"><path d="M9.800 1.800H2.300a.8.800 0 0 0-.8.800v11.800a.8.800 0 0 0 .8.800h11.800a.8.800 0 0 0 .8-.8V6.300"/><path d="M6.700 9.700L15.400 1.500"/></svg><svg class="ai" style="left:149px" width="17" height="16" viewBox="0 0 17 16" fill="none" stroke="#5c7cdd" stroke-width="1.100"><path d="M3.900 7.400V2.600h8.200v4.800"/><rect x="1.500" y="7.500" width="5" height="7"/><rect x="9.500" y="7.500" width="5.200" height="7"/></svg><svg class="ai" style="left:173px" width="17" height="16" viewBox="0 0 17 16" fill="none" stroke="#5c7cdd" stroke-width="1.050"><circle cx="8.100" cy="3.100" r="2.200"/><circle cx="3" cy="13.300" r="1.800"/><circle cx="8.100" cy="13.300" r="1.800"/><circle cx="13.200" cy="13.300" r="1.800"/><path d="M8.100 5.300v6.200M7.300 5.200L3.700 11.600M8.900 5.200l3.600 6.400"/></svg></div></div>
<div class="tr" style="top:288px"><i class="cb" style="left:12px;top:12px"></i><span class="id">14</span><a class="tt">实现新版会议的邀请成员功能</a><span class="pri" style="color:#d96731;border-color:#d96731">1</span><span class="st">草稿</span><span class="cr">李娟</span><div class="acts"><svg class="ai" style="left:16px" width="16" height="16" viewBox="0 0 16 16" fill="none" stroke="#c6c9d1" stroke-width="1.100"><path d="M10.500 6H2v8.500"/><path d="M5.300 10.400h8.100V1.800"/><path d="M.7 13.200L2 15.300l1.300-2.100z" fill="#c6c9d1" stroke="none"/><path d="M12.100 3l1.300-2.100L14.700 3z" fill="#c6c9d1" stroke="none"/></svg><svg class="ai" style="left:40px" width="16" height="16" viewBox="0 0 16 16" fill="none" stroke="#5c7cdd" stroke-width="1.100"><path d="M7.300 2.600H1.800v12.600h11.600V7.400"/><path d="M1.300 2.600v12.600" stroke-width=".6"/><path d="M4 10.400h3.700M4 12.500h7"/><path d="M8 5.200l2.300 1.600 4-4.500"/></svg><svg class="ai" style="left:65px" width="10" height="16" viewBox="0 0 10 16" fill="none" stroke="#5c7cdd" stroke-width="1.150"><path d="M1 6.300L5 10.500l4-4.200"/></svg><svg class="ai" style="left:84px" width="17" height="16" viewBox="0 0 17 16" fill="none" stroke="#5c7cdd" stroke-width="1.100"><path d="M8.200 1.200V8.200"/><path d="M4.600 2.700A7 7 0 1 0 11.800 2.700"/></svg><i class="adiv"></i><svg class="ai" style="left:125px" width="17" height="16" viewBox="0 0 17 16" fill="none" stroke="#5c7cdd" stroke-width="1.100" stroke-linejoin="round"><path d="M9.800 1.800H2.300a.8.800 0 0 0-.8.800v11.800a.8.800 0 0 0 .8.800h11.800a.8.800 0 0 0 .8-.8V6.300"/><path d="M6.700 9.700L15.400 1.500"/></svg><svg class="ai" style="left:149px" width="17" height="16" viewBox="0 0 17 16" fill="none" stroke="#5c7cdd" stroke-width="1.100"><path d="M3.900 7.400V2.600h8.200v4.800"/><rect x="1.500" y="7.500" width="5" height="7"/><rect x="9.500" y="7.500" width="5.200" height="7"/></svg><svg class="ai" style="left:173px" width="17" height="16" viewBox="0 0 17 16" fill="none" stroke="#5c7cdd" stroke-width="1.050"><circle cx="8.100" cy="3.100" r="2.200"/><circle cx="3" cy="13.300" r="1.800"/><circle cx="8.100" cy="13.300" r="1.800"/><circle cx="13.200" cy="13.300" r="1.800"/><path d="M8.100 5.300v6.200M7.300 5.200L3.700 11.600M8.900 5.200l3.600 6.400"/></svg></div></div>
<div class="tr" style="top:324px"><i class="cb" style="left:12px;top:12px"></i><span class="id">13</span><a class="tt">实现新版会议的会议白板功能</a><span class="pri" style="color:#d96731;border-color:#d96731">1</span><span class="st">草稿</span><span class="cr">李娟</span><div class="acts"><svg class="ai" style="left:16px" width="16" height="16" viewBox="0 0 16 16" fill="none" stroke="#c6c9d1" stroke-width="1.100"><path d="M10.500 6H2v8.500"/><path d="M5.300 10.400h8.100V1.800"/><path d="M.7 13.200L2 15.300l1.300-2.100z" fill="#c6c9d1" stroke="none"/><path d="M12.100 3l1.300-2.100L14.700 3z" fill="#c6c9d1" stroke="none"/></svg><svg class="ai" style="left:40px" width="16" height="16" viewBox="0 0 16 16" fill="none" stroke="#5c7cdd" stroke-width="1.100"><path d="M7.300 2.600H1.800v12.600h11.600V7.400"/><path d="M1.300 2.600v12.600" stroke-width=".6"/><path d="M4 10.400h3.700M4 12.500h7"/><path d="M8 5.200l2.300 1.600 4-4.500"/></svg><svg class="ai" style="left:65px" width="10" height="16" viewBox="0 0 10 16" fill="none" stroke="#5c7cdd" stroke-width="1.150"><path d="M1 6.300L5 10.500l4-4.200"/></svg><svg class="ai" style="left:84px" width="17" height="16" viewBox="0 0 17 16" fill="none" stroke="#5c7cdd" stroke-width="1.100"><path d="M8.200 1.200V8.200"/><path d="M4.600 2.700A7 7 0 1 0 11.800 2.700"/></svg><i class="adiv"></i><svg class="ai" style="left:125px" width="17" height="16" viewBox="0 0 17 16" fill="none" stroke="#5c7cdd" stroke-width="1.100" stroke-linejoin="round"><path d="M9.800 1.800H2.300a.8.800 0 0 0-.8.800v11.800a.8.800 0 0 0 .8.800h11.800a.8.800 0 0 0 .8-.8V6.300"/><path d="M6.700 9.700L15.400 1.500"/></svg><svg class="ai" style="left:149px" width="17" height="16" viewBox="0 0 17 16" fill="none" stroke="#5c7cdd" stroke-width="1.100"><path d="M3.900 7.400V2.600h8.200v4.800"/><rect x="1.500" y="7.500" width="5" height="7"/><rect x="9.500" y="7.500" width="5.200" height="7"/></svg><svg class="ai" style="left:173px" width="17" height="16" viewBox="0 0 17 16" fill="none" stroke="#5c7cdd" stroke-width="1.050"><circle cx="8.100" cy="3.100" r="2.200"/><circle cx="3" cy="13.300" r="1.800"/><circle cx="8.100" cy="13.300" r="1.800"/><circle cx="13.200" cy="13.300" r="1.800"/><path d="M8.100 5.300v6.200M7.300 5.200L3.700 11.600M8.900 5.200l3.600 6.400"/></svg></div></div>
<div class="tr" style="top:360px"><i class="cb" style="left:12px;top:12px"></i><span class="id">12</span><a class="tt">实现新版会议的分组讨论室功能</a><span class="pri" style="color:#d96731;border-color:#d96731">1</span><span class="st">草稿</span><span class="cr">李娟</span><div class="acts"><svg class="ai" style="left:16px" width="16" height="16" viewBox="0 0 16 16" fill="none" stroke="#c6c9d1" stroke-width="1.100"><path d="M10.500 6H2v8.500"/><path d="M5.300 10.400h8.100V1.800"/><path d="M.7 13.200L2 15.300l1.300-2.100z" fill="#c6c9d1" stroke="none"/><path d="M12.100 3l1.300-2.100L14.700 3z" fill="#c6c9d1" stroke="none"/></svg><svg class="ai" style="left:40px" width="16" height="16" viewBox="0 0 16 16" fill="none" stroke="#5c7cdd" stroke-width="1.100"><path d="M7.300 2.600H1.800v12.600h11.600V7.400"/><path d="M1.300 2.600v12.600" stroke-width=".6"/><path d="M4 10.400h3.700M4 12.500h7"/><path d="M8 5.200l2.300 1.600 4-4.500"/></svg><svg class="ai" style="left:65px" width="10" height="16" viewBox="0 0 10 16" fill="none" stroke="#5c7cdd" stroke-width="1.150"><path d="M1 6.300L5 10.500l4-4.200"/></svg><svg class="ai" style="left:84px" width="17" height="16" viewBox="0 0 17 16" fill="none" stroke="#5c7cdd" stroke-width="1.100"><path d="M8.200 1.200V8.200"/><path d="M4.600 2.700A7 7 0 1 0 11.800 2.700"/></svg><i class="adiv"></i><svg class="ai" style="left:125px" width="17" height="16" viewBox="0 0 17 16" fill="none" stroke="#5c7cdd" stroke-width="1.100" stroke-linejoin="round"><path d="M9.800 1.800H2.300a.8.800 0 0 0-.8.800v11.800a.8.800 0 0 0 .8.800h11.800a.8.800 0 0 0 .8-.8V6.300"/><path d="M6.700 9.700L15.400 1.500"/></svg><svg class="ai" style="left:149px" width="17" height="16" viewBox="0 0 17 16" fill="none" stroke="#5c7cdd" stroke-width="1.100"><path d="M3.900 7.400V2.600h8.200v4.800"/><rect x="1.500" y="7.500" width="5" height="7"/><rect x="9.500" y="7.500" width="5.200" height="7"/></svg><svg class="ai" style="left:173px" width="17" height="16" viewBox="0 0 17 16" fill="none" stroke="#5c7cdd" stroke-width="1.050"><circle cx="8.100" cy="3.100" r="2.200"/><circle cx="3" cy="13.300" r="1.800"/><circle cx="8.100" cy="13.300" r="1.800"/><circle cx="13.200" cy="13.300" r="1.800"/><path d="M8.100 5.300v6.200M7.300 5.200L3.700 11.600M8.900 5.200l3.600 6.400"/></svg></div></div>
<div class="tr" style="top:396px"><i class="cb" style="left:12px;top:12px"></i><span class="id">11</span><a class="tt">实现新版会议的主持人控制相关功能</a><span class="pri" style="color:#d96731;border-color:#d96731">1</span><span class="st">草稿</span><span class="cr">李娟</span><div class="acts"><svg class="ai" style="left:16px" width="16" height="16" viewBox="0 0 16 16" fill="none" stroke="#c6c9d1" stroke-width="1.100"><path d="M10.500 6H2v8.500"/><path d="M5.300 10.400h8.100V1.800"/><path d="M.7 13.200L2 15.300l1.300-2.100z" fill="#c6c9d1" stroke="none"/><path d="M12.100 3l1.300-2.100L14.700 3z" fill="#c6c9d1" stroke="none"/></svg><svg class="ai" style="left:40px" width="16" height="16" viewBox="0 0 16 16" fill="none" stroke="#5c7cdd" stroke-width="1.100"><path d="M7.300 2.600H1.800v12.600h11.600V7.400"/><path d="M1.300 2.600v12.600" stroke-width=".6"/><path d="M4 10.400h3.700M4 12.500h7"/><path d="M8 5.200l2.300 1.600 4-4.500"/></svg><svg class="ai" style="left:65px" width="10" height="16" viewBox="0 0 10 16" fill="none" stroke="#5c7cdd" stroke-width="1.150"><path d="M1 6.300L5 10.500l4-4.200"/></svg><svg class="ai" style="left:84px" width="17" height="16" viewBox="0 0 17 16" fill="none" stroke="#5c7cdd" stroke-width="1.100"><path d="M8.200 1.200V8.200"/><path d="M4.600 2.700A7 7 0 1 0 11.800 2.700"/></svg><i class="adiv"></i><svg class="ai" style="left:125px" width="17" height="16" viewBox="0 0 17 16" fill="none" stroke="#5c7cdd" stroke-width="1.100" stroke-linejoin="round"><path d="M9.800 1.800H2.300a.8.800 0 0 0-.8.800v11.800a.8.800 0 0 0 .8.800h11.800a.8.800 0 0 0 .8-.8V6.300"/><path d="M6.700 9.700L15.400 1.500"/></svg><svg class="ai" style="left:149px" width="17" height="16" viewBox="0 0 17 16" fill="none" stroke="#5c7cdd" stroke-width="1.100"><path d="M3.900 7.400V2.600h8.200v4.800"/><rect x="1.500" y="7.500" width="5" height="7"/><rect x="9.500" y="7.500" width="5.200" height="7"/></svg><svg class="ai" style="left:173px" width="17" height="16" viewBox="0 0 17 16" fill="none" stroke="#5c7cdd" stroke-width="1.050"><circle cx="8.100" cy="3.100" r="2.200"/><circle cx="3" cy="13.300" r="1.800"/><circle cx="8.100" cy="13.300" r="1.800"/><circle cx="13.200" cy="13.300" r="1.800"/><path d="M8.100 5.300v6.200M7.300 5.200L3.700 11.600M8.900 5.200l3.600 6.400"/></svg></div></div>
<div class="tr" style="top:432px"><i class="cb" style="left:12px;top:12px"></i><span class="id">10</span><a class="tt">实现新版会议的更多设置功能</a><span class="pri" style="color:#d96731;border-color:#d96731">1</span><span class="st">草稿</span><span class="cr">李娟</span><div class="acts"><svg class="ai" style="left:16px" width="16" height="16" viewBox="0 0 16 16" fill="none" stroke="#c6c9d1" stroke-width="1.100"><path d="M10.500 6H2v8.500"/><path d="M5.300 10.400h8.100V1.800"/><path d="M.7 13.200L2 15.300l1.300-2.100z" fill="#c6c9d1" stroke="none"/><path d="M12.100 3l1.300-2.100L14.700 3z" fill="#c6c9d1" stroke="none"/></svg><svg class="ai" style="left:40px" width="16" height="16" viewBox="0 0 16 16" fill="none" stroke="#5c7cdd" stroke-width="1.100"><path d="M7.300 2.600H1.800v12.600h11.600V7.400"/><path d="M1.300 2.600v12.600" stroke-width=".6"/><path d="M4 10.400h3.700M4 12.500h7"/><path d="M8 5.200l2.300 1.600 4-4.500"/></svg><svg class="ai" style="left:65px" width="10" height="16" viewBox="0 0 10 16" fill="none" stroke="#5c7cdd" stroke-width="1.150"><path d="M1 6.300L5 10.500l4-4.200"/></svg><svg class="ai" style="left:84px" width="17" height="16" viewBox="0 0 17 16" fill="none" stroke="#5c7cdd" stroke-width="1.100"><path d="M8.200 1.200V8.200"/><path d="M4.600 2.700A7 7 0 1 0 11.800 2.700"/></svg><i class="adiv"></i><svg class="ai" style="left:125px" width="17" height="16" viewBox="0 0 17 16" fill="none" stroke="#5c7cdd" stroke-width="1.100" stroke-linejoin="round"><path d="M9.800 1.800H2.300a.8.800 0 0 0-.8.800v11.800a.8.800 0 0 0 .8.800h11.800a.8.800 0 0 0 .8-.8V6.300"/><path d="M6.700 9.700L15.400 1.500"/></svg><svg class="ai" style="left:149px" width="17" height="16" viewBox="0 0 17 16" fill="none" stroke="#5c7cdd" stroke-width="1.100"><path d="M3.900 7.400V2.600h8.200v4.800"/><rect x="1.500" y="7.500" width="5" height="7"/><rect x="9.500" y="7.500" width="5.200" height="7"/></svg><svg class="ai" style="left:173px" width="17" height="16" viewBox="0 0 17 16" fill="none" stroke="#5c7cdd" stroke-width="1.050"><circle cx="8.100" cy="3.100" r="2.200"/><circle cx="3" cy="13.300" r="1.800"/><circle cx="8.100" cy="13.300" r="1.800"/><circle cx="13.200" cy="13.300" r="1.800"/><path d="M8.100 5.300v6.200M7.300 5.200L3.700 11.600M8.900 5.200l3.600 6.400"/></svg></div></div>
<div class="tr" style="top:468px"><i class="cb" style="left:12px;top:12px"></i><span class="id">9</span><a class="tt">优化群组会议的通知功能</a><span class="pri" style="color:#d96731;border-color:#d96731">1</span><span class="st">草稿</span><span class="cr">李娟</span><div class="acts"><svg class="ai" style="left:16px" width="16" height="16" viewBox="0 0 16 16" fill="none" stroke="#c6c9d1" stroke-width="1.100"><path d="M10.500 6H2v8.500"/><path d="M5.300 10.400h8.100V1.800"/><path d="M.7 13.200L2 15.300l1.300-2.100z" fill="#c6c9d1" stroke="none"/><path d="M12.100 3l1.300-2.100L14.700 3z" fill="#c6c9d1" stroke="none"/></svg><svg class="ai" style="left:40px" width="16" height="16" viewBox="0 0 16 16" fill="none" stroke="#5c7cdd" stroke-width="1.100"><path d="M7.300 2.600H1.800v12.600h11.600V7.400"/><path d="M1.300 2.600v12.600" stroke-width=".6"/><path d="M4 10.400h3.700M4 12.500h7"/><path d="M8 5.200l2.300 1.600 4-4.500"/></svg><svg class="ai" style="left:65px" width="10" height="16" viewBox="0 0 10 16" fill="none" stroke="#5c7cdd" stroke-width="1.150"><path d="M1 6.300L5 10.500l4-4.200"/></svg><svg class="ai" style="left:84px" width="17" height="16" viewBox="0 0 17 16" fill="none" stroke="#5c7cdd" stroke-width="1.100"><path d="M8.200 1.200V8.200"/><path d="M4.600 2.700A7 7 0 1 0 11.800 2.700"/></svg><i class="adiv"></i><svg class="ai" style="left:125px" width="17" height="16" viewBox="0 0 17 16" fill="none" stroke="#5c7cdd" stroke-width="1.100" stroke-linejoin="round"><path d="M9.800 1.800H2.300a.8.800 0 0 0-.8.800v11.800a.8.800 0 0 0 .8.800h11.800a.8.800 0 0 0 .8-.8V6.300"/><path d="M6.700 9.700L15.400 1.500"/></svg><svg class="ai" style="left:149px" width="17" height="16" viewBox="0 0 17 16" fill="none" stroke="#5c7cdd" stroke-width="1.100"><path d="M3.900 7.400V2.600h8.200v4.800"/><rect x="1.500" y="7.500" width="5" height="7"/><rect x="9.500" y="7.500" width="5.200" height="7"/></svg><svg class="ai" style="left:173px" width="17" height="16" viewBox="0 0 17 16" fill="none" stroke="#5c7cdd" stroke-width="1.050"><circle cx="8.100" cy="3.100" r="2.200"/><circle cx="3" cy="13.300" r="1.800"/><circle cx="8.100" cy="13.300" r="1.800"/><circle cx="13.200" cy="13.300" r="1.800"/><path d="M8.100 5.300v6.200M7.300 5.200L3.700 11.600M8.900 5.200l3.600 6.400"/></svg></div></div>
<div class="tr" style="top:504px"><i class="cb" style="left:12px;top:12px"></i><span class="id">8</span><a class="tt">优化会议相关的文案提示</a><span class="pri" style="color:#3f78d8;border-color:#3f78d8">3</span><span class="st">草稿</span><span class="cr">李娟</span><div class="acts"><svg class="ai" style="left:16px" width="16" height="16" viewBox="0 0 16 16" fill="none" stroke="#c6c9d1" stroke-width="1.100"><path d="M10.500 6H2v8.500"/><path d="M5.300 10.400h8.100V1.800"/><path d="M.7 13.200L2 15.300l1.300-2.100z" fill="#c6c9d1" stroke="none"/><path d="M12.100 3l1.300-2.100L14.700 3z" fill="#c6c9d1" stroke="none"/></svg><svg class="ai" style="left:40px" width="16" height="16" viewBox="0 0 16 16" fill="none" stroke="#5c7cdd" stroke-width="1.100"><path d="M7.300 2.600H1.800v12.600h11.600V7.400"/><path d="M1.300 2.600v12.600" stroke-width=".6"/><path d="M4 10.400h3.700M4 12.500h7"/><path d="M8 5.200l2.300 1.600 4-4.500"/></svg><svg class="ai" style="left:65px" width="10" height="16" viewBox="0 0 10 16" fill="none" stroke="#5c7cdd" stroke-width="1.150"><path d="M1 6.300L5 10.500l4-4.200"/></svg><svg class="ai" style="left:84px" width="17" height="16" viewBox="0 0 17 16" fill="none" stroke="#5c7cdd" stroke-width="1.100"><path d="M8.200 1.200V8.200"/><path d="M4.600 2.700A7 7 0 1 0 11.800 2.700"/></svg><i class="adiv"></i><svg class="ai" style="left:125px" width="17" height="16" viewBox="0 0 17 16" fill="none" stroke="#5c7cdd" stroke-width="1.100" stroke-linejoin="round"><path d="M9.800 1.800H2.300a.8.800 0 0 0-.8.800v11.800a.8.800 0 0 0 .8.800h11.800a.8.800 0 0 0 .8-.8V6.300"/><path d="M6.700 9.700L15.400 1.500"/></svg><svg class="ai" style="left:149px" width="17" height="16" viewBox="0 0 17 16" fill="none" stroke="#5c7cdd" stroke-width="1.100"><path d="M3.900 7.400V2.600h8.200v4.800"/><rect x="1.500" y="7.500" width="5" height="7"/><rect x="9.500" y="7.500" width="5.200" height="7"/></svg><svg class="ai" style="left:173px" width="17" height="16" viewBox="0 0 17 16" fill="none" stroke="#5c7cdd" stroke-width="1.050"><circle cx="8.100" cy="3.100" r="2.200"/><circle cx="3" cy="13.300" r="1.800"/><circle cx="8.100" cy="13.300" r="1.800"/><circle cx="13.200" cy="13.300" r="1.800"/><path d="M8.100 5.300v6.200M7.300 5.200L3.700 11.600M8.900 5.200l3.600 6.400"/></svg></div></div>
<div class="tr" style="top:540px"><i class="cb" style="left:12px;top:12px"></i><span class="id">7</span><a class="tt"></a><span class="pri" style="color:#d96731;border-color:#d96731">1</span><span class="st">草稿</span><span class="cr">李娟</span><div class="acts"><svg class="ai" style="left:16px" width="16" height="16" viewBox="0 0 16 16" fill="none" stroke="#c6c9d1" stroke-width="1.100"><path d="M10.500 6H2v8.500"/><path d="M5.300 10.400h8.100V1.800"/><path d="M.7 13.200L2 15.300l1.300-2.100z" fill="#c6c9d1" stroke="none"/><path d="M12.100 3l1.300-2.100L14.700 3z" fill="#c6c9d1" stroke="none"/></svg><svg class="ai" style="left:40px" width="16" height="16" viewBox="0 0 16 16" fill="none" stroke="#5c7cdd" stroke-width="1.100"><path d="M7.300 2.600H1.800v12.600h11.600V7.400"/><path d="M1.300 2.600v12.600" stroke-width=".6"/><path d="M4 10.400h3.700M4 12.500h7"/><path d="M8 5.200l2.300 1.600 4-4.500"/></svg><svg class="ai" style="left:65px" width="10" height="16" viewBox="0 0 10 16" fill="none" stroke="#5c7cdd" stroke-width="1.150"><path d="M1 6.300L5 10.500l4-4.200"/></svg><svg class="ai" style="left:84px" width="17" height="16" viewBox="0 0 17 16" fill="none" stroke="#5c7cdd" stroke-width="1.100"><path d="M8.200 1.200V8.200"/><path d="M4.600 2.700A7 7 0 1 0 11.800 2.700"/></svg><i class="adiv"></i><svg class="ai" style="left:125px" width="17" height="16" viewBox="0 0 17 16" fill="none" stroke="#5c7cdd" stroke-width="1.100" stroke-linejoin="round"><path d="M9.800 1.800H2.300a.8.800 0 0 0-.8.800v11.800a.8.800 0 0 0 .8.800h11.800a.8.800 0 0 0 .8-.8V6.300"/><path d="M6.700 9.700L15.400 1.500"/></svg><svg class="ai" style="left:149px" width="17" height="16" viewBox="0 0 17 16" fill="none" stroke="#5c7cdd" stroke-width="1.100"><path d="M3.900 7.400V2.600h8.200v4.800"/><rect x="1.500" y="7.500" width="5" height="7"/><rect x="9.500" y="7.500" width="5.200" height="7"/></svg><svg class="ai" style="left:173px" width="17" height="16" viewBox="0 0 17 16" fill="none" stroke="#5c7cdd" stroke-width="1.050"><circle cx="8.100" cy="3.100" r="2.200"/><circle cx="3" cy="13.300" r="1.800"/><circle cx="8.100" cy="13.300" r="1.800"/><circle cx="13.200" cy="13.300" r="1.800"/><path d="M8.100 5.300v6.200M7.300 5.200L3.700 11.600M8.900 5.200l3.600 6.400"/></svg></div></div>
  </div>
 </div>
 <i class="vl" style="left:561px"></i><i class="vl" style="left:629px"></i><i class="vl" style="left:845px"></i>
 <div class="fix"></div>
 <div style="position:absolute;left:895px;top:0;width:199px;height:35px;background:#fcfdfe;font-weight:bold;color:#2f3646"><span style="position:absolute;left:12px;line-height:35px">操作</span><i style="position:absolute;left:162.500px;top:8px;width:1px;height:19px;background:#e3e5ea"></i>
  <svg style="position:absolute;left:174.500px;top:11px" width="14" height="14" viewBox="0 0 13 13" fill="none" stroke="#4a5265" stroke-width=".95"><circle cx="6.500" cy="6.500" r="2"/><path d="M5.400 1h2.200l.4 1.500 1.200.7 1.500-.5 1.100 1.900-1.100 1.100v1.400l1.100 1.100-1.100 1.900-1.500-.5-1.200.7-.4 1.500H5.400L5 10.300l-1.200-.7-1.500.5-1.100-1.900 1.100-1.100V5.700L1.200 4.600l1.100-1.900 1.500.5L5 2.500z" stroke-linejoin="round"/></svg>
 </div>
 <div class="tf">
  <i class="cb" style="left:12px;top:13px"></i>
  <span style="left:38px">本页共 20 个研发需求，预计 0 个工时，用例覆盖率 0%。</span>
  <span style="left:807px">共 20 项</span>
  <span style="left:866px;font-size:12px">每页 20 项</span>
  <svg style="left:929px;top:15px" width="10" height="7" viewBox="0 0 10 7" fill="none" stroke="#313c52" stroke-width="1.200"><path d="M1 6l4-4.500L9 6"/></svg>
  <svg style="left:960px;top:14px" width="9" height="9" viewBox="0 0 9 9" fill="none" stroke="#a9aebb" stroke-width="1.100"><path d="M.8 0v9M8 .8L4.300 4.500 8 8.200"/></svg>
  <svg style="left:990px;top:14px" width="6" height="9" viewBox="0 0 6 9" fill="none" stroke="#a9aebb" stroke-width="1.100"><path d="M5 .8L1.300 4.500 5 8.200"/></svg>
  <span style="left:1008px">1/1</span>
  <svg style="left:1040px;top:14px" width="6" height="9" viewBox="0 0 6 9" fill="none" stroke="#a9aebb" stroke-width="1.100"><path d="M1 .8l3.700 3.700L1 8.200"/></svg>
  <svg style="left:1066px;top:14px" width="9" height="9" viewBox="0 0 9 9" fill="none" stroke="#a9aebb" stroke-width="1.100"><path d="M8.200 0v9M1 .8l3.700 3.700L1 8.200"/></svg>
 </div>
</div>

<!-- ============ BOTTOM BAR ============ -->
<div id="bot">
 <div class="appi"><svg style="left:3px;top:4px" width="12" height="11" viewBox="0 0 12 11" fill="none" stroke="#fff" stroke-width="1" stroke-linejoin="round"><rect x=".6" y=".6" width="10.800" height="7" rx="1.200"/><path d="M6 7.600v2M3.500 10h5M4.600 2.800L3.400 4.100l1.200 1.300M7.400 2.800l1.200 1.300-1.200 1.300"/></svg></div>
 <span class="t" style="left:44px;color:#3c4353">综合研发界面</span>
 <svg style="left:136.500px;top:17.500px" width="6.500" height="4.200" viewBox="0 0 8 5" fill="#3a78ee"><path d="M4 0l4 5H0z"/></svg>
 <svg style="left:154px;top:0" width="14" height="38" viewBox="0 0 14 38" fill="none" stroke="#e3e6ec" stroke-width="1"><path d="M1 0l10 19L1 38"/></svg>
 <span class="t" style="left:180.500px;color:#8d94a5;font-size:12px">地盘</span>
 <i class="sep" style="left:221.500px"></i>
 <span class="t" style="left:238px;color:#8d94a5;font-size:12px">最近聊天</span>
 <i class="sep" style="left:302.500px"></i>
 <span class="t" style="left:319px;color:#2f3646;font-weight:bold;font-size:12px">产品</span>
 <i style="position:absolute;left:321px;top:31px;width:20px;height:2px;background:#3a78ee;border-radius:1px"></i>
 <div class="gsearch"><span>请输入禅道对象</span><i></i><svg style="right:9px;top:7px" width="15" height="15" viewBox="0 0 15 15" fill="none" stroke="#2e6ff0" stroke-width="1.700" stroke-linecap="round"><circle cx="6.500" cy="6.500" r="5"/><path d="M10.300 10.300l3.500 3.500"/></svg></div>
 <div class="ver">开源版21.1</div>
 <svg style="left:1274.500px;top:9.500px" width="20.500" height="20.500" viewBox="0 0 22 22"><defs><linearGradient id="lg" x1="0" y1="1" x2="1" y2="0"><stop offset="0" stop-color="#0e6ad8"/><stop offset="1" stop-color="#17b2fa"/></linearGradient></defs><circle cx="11" cy="11" r="10.800" fill="url(#lg)"/><g transform="translate(-.2 -1) translate(11 11) scale(.87) translate(-11 -11)"><path d="M2 8.200C3 5.500 5.500 4 8.500 3.700c3.500-.3 7 1.300 9 4.500 1.300-.4 2.100-1.600 2.600-3.100.7 2.100.5 3.900-.4 4.800-.7.900-1.700 1.500-2.700 1.800.8 1.300.9 2.700.5 3.900-.5 1.800-1.500 3.100-2.700 3.900-1.400.9-3.100 1.400-4.800 1.300-2.200-.2-4.200-1-5.600-2.200C3 17.200 2.200 15.400 2 13.400c-.2-1.800-.2-3.600 0-5.200z" fill="#fff"/><circle cx="11.600" cy="13.700" r="2.800" fill="none" stroke="#157fe6" stroke-width="2.400"/><path d="M10.800 11c-1.800-.9-3.300-2.300-3.900-4.300" fill="none" stroke="#157fe6" stroke-width="0" /><path d="M6.300 6.500C4.500 7.700 3.700 9.300 3.800 10.800c.1 1.500.6 2.800 1.500 3.800" fill="none" stroke="#1577e0" stroke-width="1.900" stroke-linecap="round"/></g></svg>
</div>

</div>
</body></html>
